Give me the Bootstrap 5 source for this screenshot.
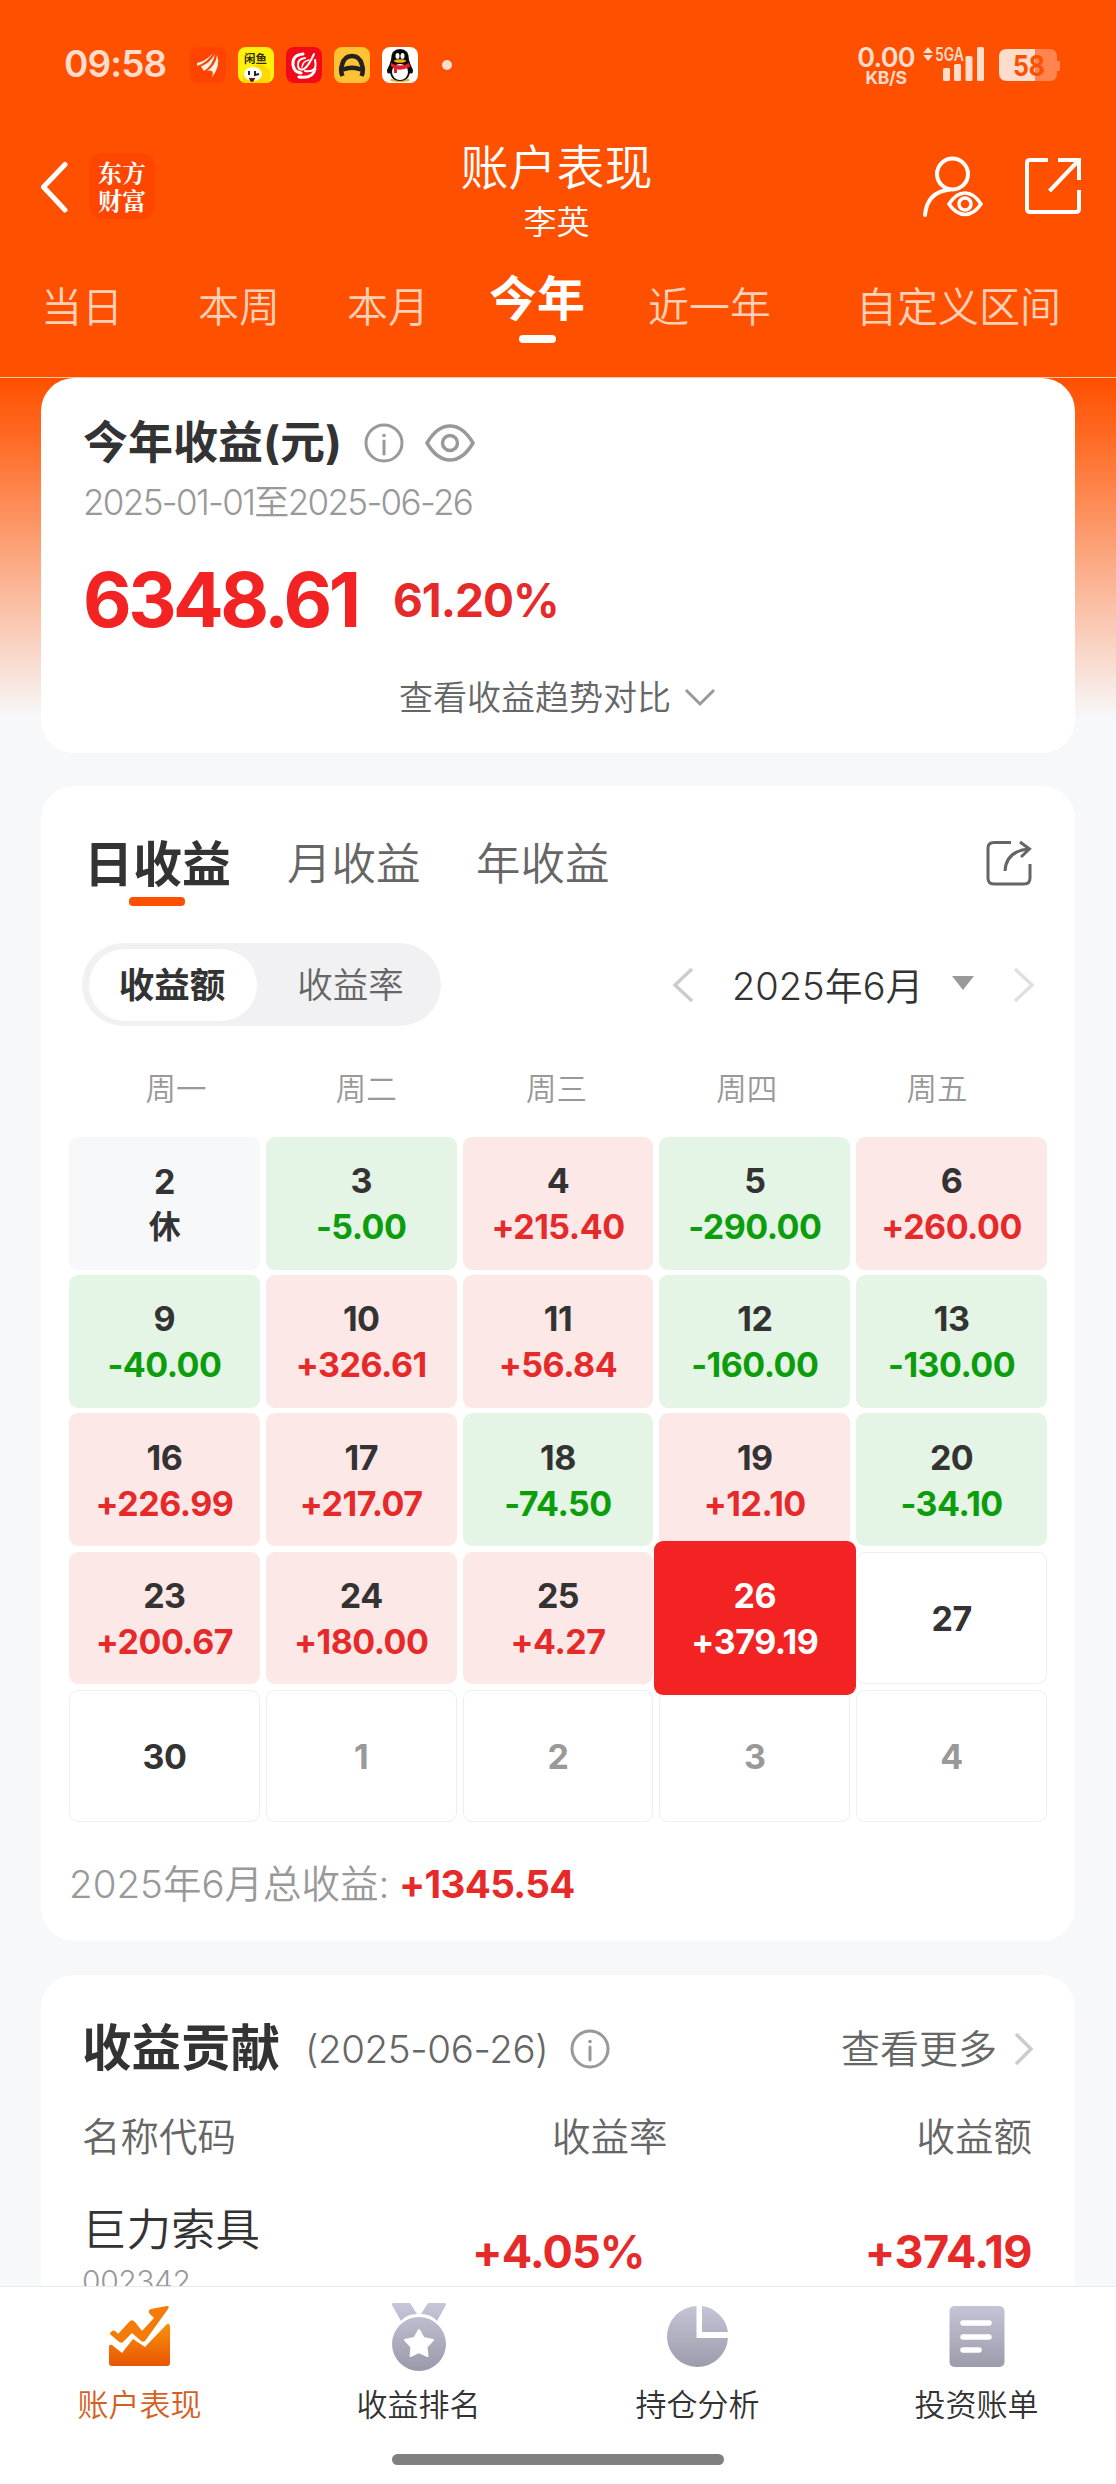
<!DOCTYPE html>
<html lang="zh-CN">
<head>
<meta charset="utf-8">
<meta name="viewport" content="width=device-width, initial-scale=1">
<title>账户表现</title>
<link href="https://cdn.jsdelivr.net/npm/bootstrap@5.3.0/dist/css/bootstrap.min.css" rel="stylesheet">
<style>
  body{width:1116px;height:2484px;overflow:hidden;background:#f7f8fa;color:#333;
    font-family:Inter,"Noto Sans CJK SC",sans-serif;font-weight:350;line-height:1}
  svg{display:block;flex:none}
  .t{white-space:nowrap;line-height:1}
  .c9{color:#999}.c6{color:#666}.red{color:#e62a2a}
  .b6{font-weight:600}.b7{font-weight:700}
  .top{height:378px;background:#ff5000;border-bottom:1px solid #ffc9a0}
  .statusbar{height:130px;padding:0 55px 0 64px;color:#ffdccc}
  .clock{font-size:37px;width:126px;letter-spacing:-.9px;margin-top:-3px}
  .apps{gap:12px}
  .rate{width:60px;margin-right:7px}
  .rate .v{font-size:27px;letter-spacing:-.8px}
  .rate .u{font-size:17.5px;margin-top:-2px;font-weight:700;letter-spacing:-.3px}
  .head{height:130px;padding:0 35px 0 40px}
  .side{width:250px}
  .logo{width:66px;height:66px;border-radius:13px;background:#ff4600;margin-left:21px;color:#fff;
    font:700 24px/28px "Noto Serif CJK SC","Noto Sans CJK SC",sans-serif;padding-top:5px}
  .title{font-size:48px;margin-bottom:14px}
  .owner{font-size:33px}
  .range{height:117px;padding:25px 0 0 41px;color:#ffd0b6;font-size:41px}
  .range .t{height:42px;padding-top:2px}
  .range .on{font-size:48px;color:#fff;font-weight:700;position:relative;padding-top:0}
  .range .on::after{content:"";position:absolute;left:30px;top:60px;width:37px;height:8px;border-radius:4px;background:#fff}
  .body-area{height:1908px;overflow:hidden;padding:0 41px;
    background:linear-gradient(#ff5000 0,#ff6a24 60px,#f7f8fa 340px,#f7f8fa 100%)}
  .panel{background:#fff;border-radius:33px;width:1034px}
  .p1{height:375px;padding:42px 43px 0 42px}
  .p1 h1{font-size:45px;font-weight:700;margin:0}
  .p2{height:1155px;margin-top:33px;padding-top:54px}
  .tabs{padding:0 43px 0 43px;height:66px;font-size:44.5px}
  .tabs .on{font-size:49px;font-weight:700;position:relative}
  .tabs .on::after{content:"";position:absolute;left:45px;top:57px;width:56px;height:9px;border-radius:4px;background:#ff5000}
  .ctrl{padding:0 40px 0 41px;height:83px;margin-top:37px}
  .seg{width:359px;height:83px;border-radius:42px;background:#f1f1f4;font-size:35.5px;padding:6px 7px}
  .seg .on{width:168px;height:72px;border-radius:36px;background:#fff;font-weight:700;padding:2px 2px 0 0}
  .week{padding:0 43px 0 40px;height:111px;font-size:30.5px;color:#999}
  .cal{display:grid;grid-template-columns:repeat(5,1fr);gap:5.6px 6px;width:978px;margin-left:28px;grid-auto-rows:132.6px;font-size:34px;font-weight:680}
  .day{border-radius:9px;display:flex;flex-direction:column;align-items:center;justify-content:center;gap:12px;padding-top:2px;letter-spacing:-.5px}
  .up{background:#fde8e8}.dn{background:#e4f4e5}.off{background:#f7f8fa}.none{border:1px solid #eee}
  .up i{color:#e62a2a}.dn i{color:#0b9d0b}.day i{font-style:normal}
  .pick{background:#f32323;color:#fff;margin:-11px -5.5px;z-index:1}
  .sum{padding:43px 0 0 28px;font-size:38.5px}
  .p3{height:311px;margin-top:34px;padding:49px 43px 0 41px;border-radius:33px 33px 0 0}
  .p3 h2{font-size:49.5px;font-weight:700;margin:0}
  .bottom{height:198px;background:#fff;border-top:1px solid #eaeaea}
  .bottom .item{width:279px;height:132px;padding-top:14px}
  .bottom .lbl{font-size:31px;margin-top:18px}
  .homebar{width:332px;height:11px;border-radius:6px;background:#808080;margin:35px auto 0}
</style>
</head>
<body>
<header class="top">
  <div class="statusbar d-flex align-items-center">
    <div class="t b6 clock">09:58</div>
    <div class="apps d-flex">
      <svg width="36" height="36" viewBox="0 0 36 36"><rect width="36" height="36" rx="8" fill="#ff4300"/><g fill="#fff0e8"><path d="M7 16Q16 14 23 6Q18 15 7 19Z"/><path d="M11 19.500Q20 16 25 7Q23 18 14 24Z"/><path d="M17 24Q26 18 27 8Q31 19 22 30Q25 22 17 24Z"/></g></svg>
      <svg width="36" height="36" viewBox="0 0 36 36"><rect width="36" height="36" rx="8" fill="#fff20a"/><text x="6" y="15.500" font-size="11.500" font-weight="700" fill="#332d00">闲鱼</text><path d="M5 36Q3 22 15 20Q24 13 32 24Q33 33 30 36Z" fill="#ffd800"/><ellipse cx="15" cy="27" rx="9" ry="7" fill="#fff"/><path d="M11 24v4M17 24v4l4-1" stroke="#222" stroke-width="2" fill="none"/><path d="M11 31h6q-1 4-3 4t-3-4" fill="#6b1408"/></svg>
      <svg width="36" height="36" viewBox="0 0 36 36"><rect width="36" height="36" rx="8" fill="#f20a1b"/><g fill="none" stroke="#fff" stroke-linecap="round"><path d="M17 7Q6 8 7 18Q8 25 15 26" stroke-width="3"/><path d="M19 11Q11 12 12 19Q13 24 18 22Q22 20 28 7" stroke-width="2"/><path d="M29 13Q32 26 19 24" stroke-width="2"/><path d="M13 30Q27 32 29 22" stroke-width="3"/><path d="M16 20Q17 14 23 13" stroke-width="1.500"/></g></svg>
      <svg width="36" height="36" viewBox="0 0 36 36"><rect width="36" height="36" rx="8" fill="#ffc233"/><path d="M8.500 29Q6 23 8 18Q10 9 18 9T28 18Q30 23 27.500 29M9 22.500Q18 19 27 22.500" fill="none" stroke="#222" stroke-width="4.500"/></svg>
      <svg width="36" height="36" viewBox="0 0 36 36"><rect width="36" height="36" rx="8" fill="#fff"/><ellipse cx="18" cy="33" rx="10" ry="2" fill="#e8b04a"/><path d="M18 2Q27 2 27 13Q28 17 31 23Q31 28 28 26Q26 34 18 34T8 26Q5 28 5 23Q8 17 9 13Q9 2 18 2" fill="#0a0a0a"/><ellipse cx="18" cy="25" rx="8" ry="8" fill="#fff"/><path d="M9 16Q18 21 27 16L28 20Q18 24 15 22V26H12V21Q8 20 9 16" fill="#e0202c"/><ellipse cx="15.500" cy="9" rx="2" ry="3" fill="#fff"/><ellipse cx="20.500" cy="9" rx="2" ry="3" fill="#fff"/><ellipse cx="18" cy="14" rx="6" ry="1.700" fill="#ffb000"/></svg>
    </div>
    <svg width="10" height="10" class="ms-4"><circle cx="5" cy="5" r="5" fill="#ffdccc"/></svg>
    <div class="rate ms-auto d-flex flex-column align-items-center b6"><span class="t v">0.00</span><span class="t u">KB/S</span></div>
    <svg width="62" height="36" viewBox="0 0 62 36"><g fill="#ffdccc"><path d="M0 6L5 0 10 6zM0 8L5 14 10 8z"/><rect x="20" y="21" width="7" height="13" rx="1.500"/><rect x="31" y="17" width="7" height="17" rx="1.500"/><rect x="42.500" y="9" width="7" height="25" rx="1.500"/><rect x="54" y="0" width="7" height="34" rx="1.500"/><text x="12" y="14" font-size="18" font-weight="600" textLength="29" lengthAdjust="spacingAndGlyphs">5GA</text></g></svg>
    <svg width="62" height="34" viewBox="0 0 62 34" style="margin-left:14px"><path d="M36 1H51Q58 1 58 9V13H61V23H58V25Q58 33 51 33H36z" fill="#ff844d"/><path d="M8 1H36V33H8Q0 33 0 25V9Q0 1 8 1" fill="#ffdccc"/><text x="14" y="27.500" font-size="28" font-weight="700" fill="#ff5000" textLength="32" lengthAdjust="spacingAndGlyphs">58</text></svg>
  </div>
  <div class="head d-flex justify-content-between">
    <div class="side d-flex" style="padding-top:23px">
      <svg width="28" height="66" viewBox="0 0 28 66"><path d="M25 11.500L3.500 34 25 57" fill="none" stroke="#fff" stroke-width="5" stroke-linecap="round" stroke-linejoin="round"/></svg>
      <div class="logo text-center">东方<br>财富</div>
    </div>
    <div class="text-center text-white" style="padding-top:14px;margin-right:8px"><div class="t title">账户表现</div><div class="t owner">李英</div></div>
    <div class="side d-flex justify-content-end" style="padding-top:26px;gap:41px">
      <svg width="62" height="62" viewBox="0 0 62 62" fill="none" stroke="#fff" stroke-width="4"><ellipse cx="30.500" cy="18" rx="15.500" ry="15.500"/><path d="M3 59Q5 36 28 33.500" stroke-linecap="round"/><path d="M27 48Q34 37 43 37T59 48Q52 58.500 43 58.500T27 48z" stroke-width="3.500"/><circle cx="43" cy="48" r="6" stroke-width="3.500"/></svg>
      <svg width="56" height="60" viewBox="0 0 56 60" fill="none" stroke="#fff" stroke-width="4"><path d="M23 4H5Q2 4 2 7V53Q2 56 5 56H51Q54 56 54 53V34M33 4H54V24M54 4L24.500 35"/></svg>
    </div>
  </div>
  <nav class="range d-flex">
    <div class="t" style="width:157px">当日</div><div class="t" style="width:149px">本周</div><div class="t" style="width:142px">本月</div><div class="t on" style="width:159px;margin-top:-10px">今年</div><div class="t" style="width:208px">近一年</div><div class="t">自定义区间</div>
  </nav>
</header>

<main class="body-area">
  <section class="panel p1">
    <div class="d-flex align-items-center">
      <h1 class="t">今年收益(元)</h1>
      <svg width="40" height="40" viewBox="0 0 40 40" fill="none" stroke="#999" stroke-width="3" style="margin-left:22px"><circle cx="20" cy="20" r="18"/><path d="M20 18v13" stroke-linecap="round"/><circle cx="20" cy="12.500" r="1.800" fill="#999" stroke="none"/></svg>
      <svg width="50" height="40" viewBox="0 0 50 40" fill="none" stroke="#999" stroke-width="3.500" style="margin-left:21px"><path d="M2 20Q12 3 25 3T48 20Q38 37 25 37T2 20z"/><circle cx="25" cy="20" r="7.500"/></svg>
    </div>
    <div class="t c9" style="font-size:35px;margin-top:20px;letter-spacing:-1.65px">2025-01-01至2025-06-26</div>
    <div class="d-flex align-items-center" style="margin-top:42px">
      <div class="t b7" style="font-size:75px;color:#f32323;width:310px;letter-spacing:-3.5px">6348.61</div><div class="t b6 red" style="font-size:46px;letter-spacing:-1px;font-weight:680">61.20%</div>
    </div>
    <div class="d-flex justify-content-center align-items-center c6" style="margin-top:44px">
      <span class="t" style="font-size:34px">查看收益趋势对比</span>
      <svg width="32" height="20" viewBox="0 0 32 20" style="margin-left:13px"><path d="M2 2L16 16 30 2" fill="none" stroke="#999" stroke-width="3"/></svg>
    </div>
  </section>

  <section class="panel p2">
    <div class="tabs d-flex">
      <div class="t on" style="width:203px">日收益</div><div class="t c6" style="width:189px;padding-top:2px">月收益</div><div class="t c6" style="padding-top:2px">年收益</div>
      <svg class="ms-auto" width="46" height="46" viewBox="0 0 46 46" fill="none" stroke="#666" stroke-width="3"><path d="M25 2.500H8Q2 2.500 2 8V38Q2 44 8 44H38Q44 44 44 38V24M19 31Q20 11 43 9M34 2L43.500 9 35 17"/></svg>
    </div>
    <div class="ctrl d-flex align-items-center">
      <div class="seg d-flex align-items-center"><div class="t on d-flex align-items-center justify-content-center">收益额</div><div class="t c6 flex-fill text-center" style="padding:2px 0 0 10px">收益率</div></div>
      <svg width="22" height="36" viewBox="0 0 22 36" class="ms-auto"><path d="M20 2L3 18 20 34" fill="none" stroke="#ccc" stroke-width="3.500"/></svg>
      <div class="t" style="font-size:38px;margin-left:38px;width:190px;padding-top:2px">2025年6月</div>
      <svg width="22" height="14" viewBox="0 0 22 14" style="margin:0 39px 4px 30px"><path d="M0 0H22L11 14z" fill="#999"/></svg>
      <svg width="22" height="36" viewBox="0 0 22 36"><path d="M2 2L19 18 2 34" fill="none" stroke="#e0e0e0" stroke-width="3.500"/></svg>
    </div>
    <div class="week d-flex text-center"><div class="t flex-fill pt-5">周一</div><div class="t flex-fill pt-5">周二</div><div class="t flex-fill pt-5">周三</div><div class="t flex-fill pt-5">周四</div><div class="t flex-fill pt-5">周五</div></div>
    <div class="cal">
      <div class="day off"><span>2</span><span style="font-size:32px">休</span></div><div class="day dn">3<i>-5.00</i></div><div class="day up">4<i>+215.40</i></div><div class="day dn">5<i>-290.00</i></div><div class="day up">6<i>+260.00</i></div>
      <div class="day dn">9<i>-40.00</i></div><div class="day up">10<i>+326.61</i></div><div class="day up">11<i>+56.84</i></div><div class="day dn">12<i>-160.00</i></div><div class="day dn">13<i>-130.00</i></div>
      <div class="day up">16<i>+226.99</i></div><div class="day up">17<i>+217.07</i></div><div class="day dn">18<i>-74.50</i></div><div class="day up">19<i>+12.10</i></div><div class="day dn">20<i>-34.10</i></div>
      <div class="day up">23<i>+200.67</i></div><div class="day up">24<i>+180.00</i></div><div class="day up">25<i>+4.27</i></div><div class="day pick">26<i>+379.19</i></div><div class="day none">27</div>
      <div class="day none">30</div><div class="day none c9">1</div><div class="day none c9">2</div><div class="day none c9">3</div><div class="day none c9">4</div>
    </div>
    <div class="sum d-flex"><span class="t c9" style="width:330px">2025年6月总收益:</span><span class="t b7 red" style="letter-spacing:-.6px">+1345.54</span></div>
  </section>

  <section class="panel p3">
    <div class="d-flex align-items-center">
      <h2 class="t" style="width:223px">收益贡献</h2><span class="t c6" style="font-size:38.5px;width:265px;letter-spacing:-.4px">(2025-06-26)</span>
      <svg width="40" height="40" viewBox="0 0 40 40" fill="none" stroke="#999" stroke-width="3"><circle cx="20" cy="20" r="18"/><path d="M20 18v13" stroke-linecap="round"/><circle cx="20" cy="12.500" r="1.800" fill="#999" stroke="none"/></svg>
      <span class="t c6 ms-auto" style="font-size:39px">查看更多</span>
      <svg width="20" height="34" viewBox="0 0 20 34" style="margin:0 -2px 0 17px"><path d="M2 2L17 17 2 32" fill="none" stroke="#ccc" stroke-width="3.500"/></svg>
    </div>
    <div class="d-flex c6" style="font-size:38.500px;margin-top:44px"><span class="t" style="width:470px">名称代码</span><span class="t">收益率</span><span class="t ms-auto">收益额</span></div>
    <div class="d-flex align-items-start" style="margin-top:52px">
      <div style="width:390px"><div class="t" style="font-size:44.5px">巨力索具</div><div class="t c9" style="font-size:30px;margin-top:13px;letter-spacing:-.4px">002342</div></div>
      <div class="t red" style="font-size:45px;margin-top:21px;letter-spacing:-.9px;font-weight:680">+4.05%</div><div class="t red ms-auto" style="font-size:45px;margin-top:21px;letter-spacing:-.6px;font-weight:680">+374.19</div>
    </div>
  </section>
</main>

<footer class="bottom">
  <nav class="d-flex">
    <div class="item d-flex flex-column align-items-center"><svg width="62" height="70" viewBox="0 0 62 70"><defs><linearGradient id="og" x1="0" y1="0" x2="0" y2="1" gradientUnits="objectBoundingBox"><stop stop-color="#f89108"/><stop offset="1" stop-color="#e85604"/></linearGradient><linearGradient id="gg" x1="0" y1="0" x2="0" y2="70" gradientUnits="userSpaceOnUse"><stop stop-color="#c9c8da"/><stop offset="1" stop-color="#9a99a9"/></linearGradient></defs><path d="M2 31Q5 27 9 33L21 20Q23 18 26 21L33 30 45 17 40 12Q39 9 42 8L58 5Q61 5 59 8L36 40Q33 42 31 39L23 32 14 41Q12 43 9 40L2 34Q0 33 2 31" fill="#f47b08"/><path d="M3 44L13 52 24 38 36 46 58 23Q61 22 61 26V62Q61 65 58 65H3Q0 65 0 62V45Q1 43 3 44" fill="url(#og)"/></svg><div class="t lbl" style="color:#d4601f">账户表现</div></div>
    <div class="item d-flex flex-column align-items-center"><svg width="62" height="70" viewBox="0 0 62 70" fill="url(#gg)"><path d="M5 2H22L29 13Q19 13 13 20L4 4Q4 2 5 2M57 2H40L33 13Q43 13 49 20L58 4Q58 2 57 2"/><circle cx="31" cy="43" r="27"/><path d="M31 29L35.500 37 45 39 38.500 46 39.500 55 31 51 22.500 55 23.500 46 17 39 26.500 37z" fill="#fff" stroke="#fff" stroke-width="2" stroke-linejoin="round"/></svg><div class="t lbl">收益排名</div></div>
    <div class="item d-flex flex-column align-items-center"><svg width="62" height="70" viewBox="0 0 62 70" fill="url(#gg)"><path d="M29.500 5V37H61A30.500 30.500 0 1 1 29.500 5M35 5A30.500 30.500 0 0 1 61 31H35z"/></svg><div class="t lbl">持仓分析</div></div>
    <div class="item d-flex flex-column align-items-center"><svg width="62" height="70" viewBox="0 0 62 70"><rect x="3.500" y="5" width="55" height="61" rx="5" fill="url(#gg)"/><path d="M17 22H43M17 36H43M17 49H33" stroke="#fff" stroke-width="5.500" stroke-linecap="round"/></svg><div class="t lbl">投资账单</div></div>
  </nav>
  <div class="homebar"></div>
</footer>
<script src="https://cdn.jsdelivr.net/npm/bootstrap@5.3.0/dist/js/bootstrap.bundle.min.js"></script>
</body>
</html>
